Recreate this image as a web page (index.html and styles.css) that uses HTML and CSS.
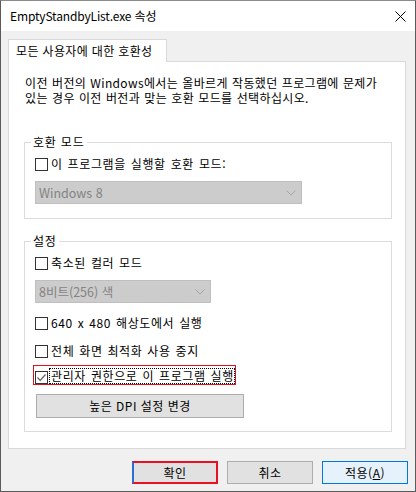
FILE: index.html
```html
<!DOCTYPE html>
<html lang="ko">
<head>
<meta charset="utf-8">
<title>EmptyStandbyList.exe 속성</title>
<link rel="stylesheet" href="styles.css">
</head>
<body>
<div class="window">
  <div class="titlebar">
    <span class="title">EmptyStandbyList.exe 속성</span>
    <svg class="close" width="11" height="11" viewBox="0 0 11 11"><path d="M0.5 0.5 L10.5 10.5 M10.5 0.5 L0.5 10.5" stroke="#000" stroke-width="1" fill="none"/></svg>
  </div>
  <div class="body">
    <div class="tabs"><div class="tab">모든 사용자에 대한 호환성</div></div>
    <div class="panel">
      <p class="intro">이전 버전의 Windows에서는 올바르게 작동했던 프로그램에 문제가<br>있는 경우 이전 버전과 맞는 호환 모드를 선택하십시오.</p>
      <fieldset class="group group-compat">
        <legend>호환 모드</legend>
        <div class="check row-a"><span class="box"></span><span class="label">이 프로그램을 실행할 호환 모드:</span></div>
        <div class="select select-wide"><span>Windows 8</span><svg width="10" height="6" viewBox="0 0 10 6"><path d="M0.5 0.5 L5 5 L9.5 0.5" stroke="#a6a6a6" fill="none"/></svg></div>
      </fieldset>
      <fieldset class="group group-settings">
        <legend>설정</legend>
        <div class="check row-a"><span class="box"></span><span class="label">축소된 컬러 모드</span></div>
        <div class="select select-narrow"><span>8비트(256) 색</span><svg width="10" height="6" viewBox="0 0 10 6"><path d="M0.5 0.5 L5 5 L9.5 0.5" stroke="#a6a6a6" fill="none"/></svg></div>
        <div class="check row-b"><span class="box"></span><span class="label">640 x 480 해상도에서 실행</span></div>
        <div class="check row-c"><span class="box"></span><span class="label">전체 화면 최적화 사용 중지</span></div>
        <div class="check row-focus"><span class="box checked"><svg width="11" height="11" viewBox="0 0 11 11"><path d="M1.5 5.5 L4.2 8.3 L9.5 2.5" stroke="#5c5c5c" stroke-width="1.2" fill="none"/></svg></span><span class="label focus">관리자 권한으로 이 프로그램 실행</span></div>
        <button class="btn dpi">높은 DPI 설정 변경</button>
      </fieldset>
    </div>
    <div class="footer">
      <button class="btn ok">확인</button>
      <button class="btn">취소</button>
      <button class="btn apply">적용(<u>A</u>)</button>
    </div>
  </div>
</div>
</body>
</html>
```

FILE: styles.css
```css
* { box-sizing: border-box; }
html, body { margin: 0; padding: 0; }
body {
  font-family: "Noto Sans CJK KR", "Noto Sans", sans-serif;
  font-size: 12px;
  color: #000;
  background: #fff;
}
.window {
  width: 416px;
  height: 492px;
  border: 1px solid #5a5a5a;
  border-top-color: #8a8a8a;
  display: flex;
  flex-direction: column;
  background: #f0f0f0;
}
.titlebar {
  height: 30px;
  background: #fff;
  display: flex;
  align-items: center;
  justify-content: space-between;
  padding: 0 9px 0 9px;
  flex: none;
}
.title { font-size: 12px; line-height: 16px; letter-spacing: -0.15px; }
.close { display: block; margin-top: 1px; }
.body {
  flex: 1;
  padding: 8px 0 0 7px;
  display: flex;
  flex-direction: column;
}
.tabs { display: flex; position: relative; z-index: 1; }
.tab {
  width: 159px;
  height: 23px;
  background: #fff;
  border: 1px solid #d9d9d9;
  border-bottom: none;
  margin-bottom: -1px;
  padding: 3px 0 0 7px;
  line-height: 16px;
  letter-spacing: 0.35px;
}
.panel {
  width: 398px;
  height: 388px;
  background: #fff;
  border: 1px solid #d9d9d9;
  padding: 13px 0 0 15px;
}
.intro {
  margin: 0 0 0 1px;
  line-height: 15px;
  letter-spacing: 0.35px;
  word-spacing: 0.5px;
}
.group {
  width: 368px;
  margin: 0;
  padding: 0 10px;
  border: 1px solid #dcdcdc;
  min-inline-size: 0;
}
.group legend {
  padding: 0 2px;
  margin-left: -4px;
  line-height: 16px;
  letter-spacing: 0.8px;
}
.group-compat { margin-top: 29px; padding-bottom: 14px; }
.group-settings { margin-top: 14px; padding-bottom: 13px; }
.check {
  display: flex;
  align-items: center;
  height: 16px;
}
.box {
  width: 13px;
  height: 13px;
  border: 1px solid #333;
  background: #fff;
  flex: none;
  display: flex;
  align-items: center;
  justify-content: center;
}
.box svg { display: block; }
.label {
  margin-left: 3px;
  line-height: 16px;
  letter-spacing: 0.6px;
  word-spacing: 1px;
  white-space: nowrap;
}
.row-a { margin-top: 6px; }
.row-b { margin-top: 12px; }
.row-c { margin-top: 12px; }
.row-focus {
  margin: 6px 0 0 -2px;
  height: auto;
  display: inline-flex;
  align-items: flex-end;
  border: 1px solid #e0101e;
  padding: 2px 0 0 1px;
}
.row-focus .label.focus {
  margin-left: 1px;
  border: 1px dotted #000;
  padding: 0 0 0 1px;
  line-height: 14px;
  height: 16px;
}
.select {
  height: 23px;
  margin-top: 9px;
  background: #cccccc;
  border: 1px solid #bfbfbf;
  color: #838383;
  font-size: 12.5px;
  display: flex;
  align-items: center;
  justify-content: space-between;
  padding: 0 5px 0 3px;
}
.select svg { display: block; }
.select-wide { width: 267px; }
.select-narrow { width: 176px; }
.btn {
  font-family: inherit;
  font-size: 12px;
  color: #000;
  background: #e1e1e1;
  border: 1px solid #adadad;
  height: 23px;
  padding: 0;
  margin: 0;
  line-height: 16px;
  letter-spacing: 0.5px;
}
.dpi {
  display: block;
  width: 208px;
  height: 24px;
  margin: 8px 0 0 1px;
}
.footer {
  display: flex;
  justify-content: flex-end;
  gap: 9px;
  padding-right: 7px;
  margin-top: 12px;
}
.footer .btn { width: 86px; }
.ok { border: 2px solid #e81123; border-left-color: #2a6fd6; }
.apply { background: #e5f1fb; border-color: #0078d7; }
.apply u { text-underline-offset: 1px; }
```
